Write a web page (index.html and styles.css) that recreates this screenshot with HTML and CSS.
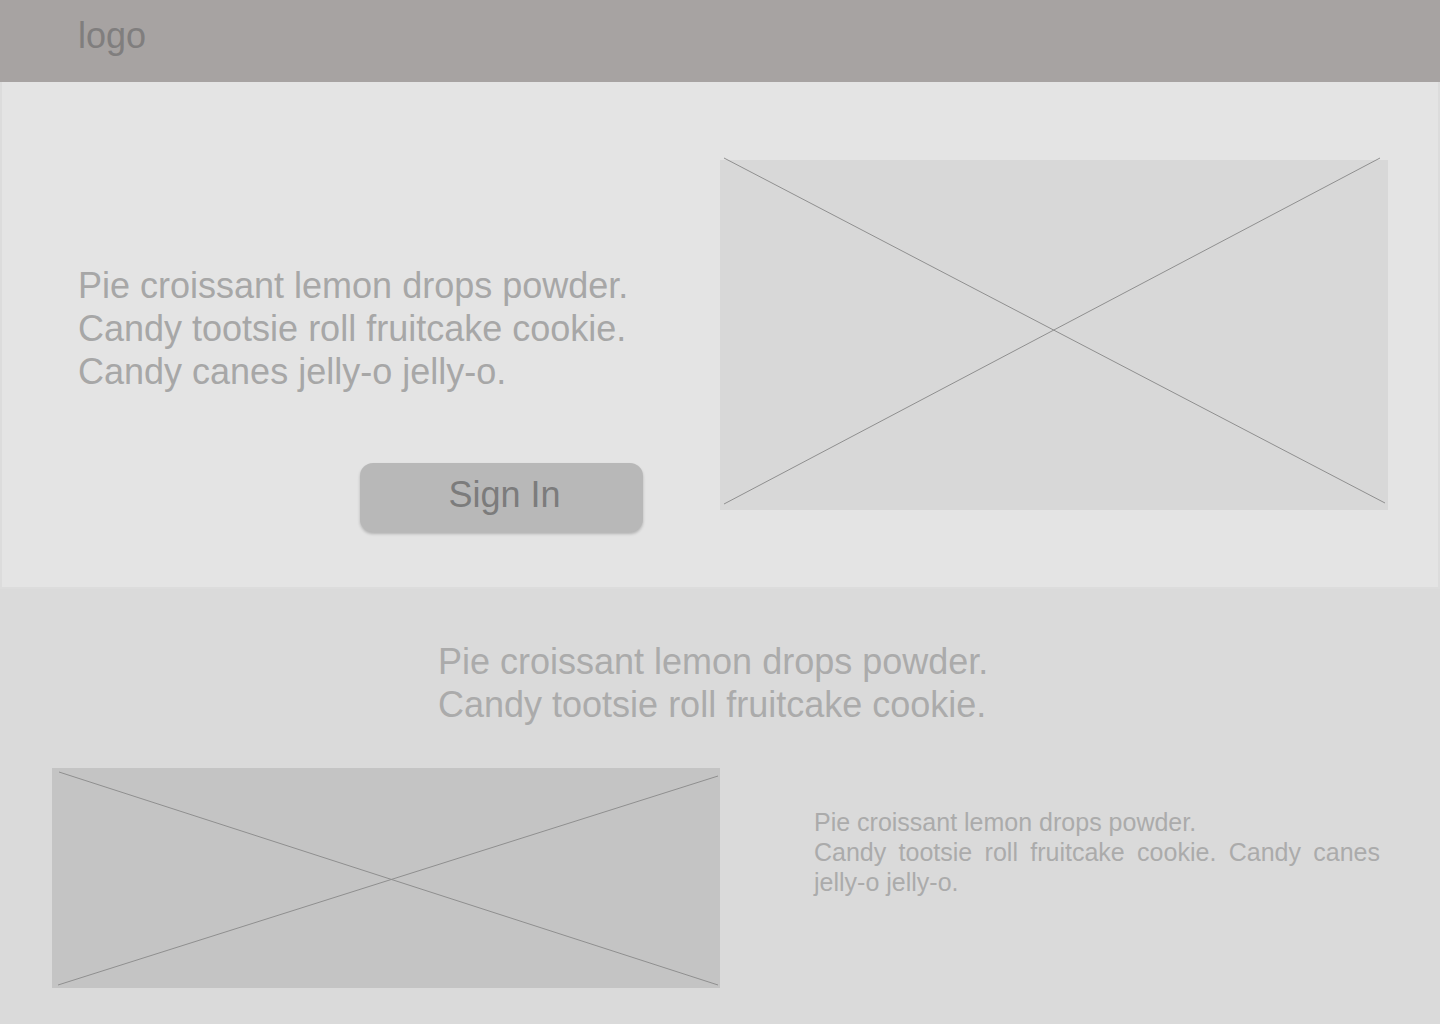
FILE: index.html
```html
<!DOCTYPE html>
<html lang="en">
<head>
<meta charset="utf-8">
<title>Wireframe</title>
<link rel="stylesheet" href="styles.css">
</head>
<body>
<header class="topbar">
  <div class="logo">logo</div>
</header>
<section class="hero">
  <div class="hero-copy">
    <p class="hero-text">Pie croissant lemon drops powder.<br>Candy tootsie roll fruitcake cookie.<br>Candy canes jelly-o jelly-o.</p>
    <button class="btn-signin" type="button">Sign In</button>
  </div>
  <div class="placeholder hero-img">
    <svg class="x-lines" viewBox="0 0 668 350" preserveAspectRatio="none">
      <line x1="4" y1="-2" x2="665" y2="343"/>
      <line x1="660" y1="-2" x2="4" y2="344"/>
    </svg>
  </div>
</section>
<section class="feature">
  <h2 class="feature-title">Pie croissant lemon drops powder.<br>Candy tootsie roll fruitcake cookie.</h2>
  <div class="feature-row">
    <div class="placeholder feature-img">
      <svg class="x-lines" viewBox="0 0 668 220" preserveAspectRatio="none">
        <line x1="7" y1="4" x2="666" y2="217"/>
        <line x1="666" y1="8" x2="6" y2="217"/>
      </svg>
    </div>
    <p class="feature-text">Pie croissant lemon drops powder.<br>Candy tootsie roll fruitcake cookie. Candy canes jelly-o jelly-o.</p>
  </div>
</section>
</body>
</html>
```
FILE: styles.css
```css
* { box-sizing: border-box; }
html, body { margin: 0; padding: 0; }
body {
  width: 1440px;
  height: 1024px;
  overflow: hidden;
  background: #dadada;
  font-family: "Liberation Sans", Arial, Helvetica, sans-serif;
}
.topbar {
  height: 82px;
  background: #a7a3a2;
  padding-left: 78px;
  display: flex;
  align-items: flex-start;
}
.logo {
  font-size: 36px;
  line-height: 40px;
  margin-top: 16px;
  color: #807e7e;
}
.hero {
  height: 507px;
  background: #e4e4e4;
  border: 2px solid #dcdcdc;
  border-top: 0;
  padding: 78px 50px 0 76px;
  display: flex;
  align-items: flex-start;
}
.hero-copy {
  width: 565px;
  margin-right: 77px;
  margin-top: 104px;
  display: flex;
  flex-direction: column;
}
.hero-text {
  margin: 0;
  font-size: 36px;
  line-height: 43px;
  color: #a7a7a7;
}
.btn-signin {
  align-self: flex-end;
  margin-top: 70px;
  width: 283px;
  height: 69px;
  border: 0;
  border-radius: 13px;
  background: #b8b8b8;
  box-shadow: 0 2px 3px rgba(0,0,0,0.22);
  font-family: inherit;
  font-size: 36px;
  color: #7c7c7c;
  padding: 0 0 6px 6px;
  cursor: pointer;
}
.placeholder {
  position: relative;
}
.x-lines {
  position: absolute;
  inset: 0;
  width: 100%;
  height: 100%;
  overflow: visible;
}
.x-lines line {
  stroke: #8f8f8f;
  stroke-width: 1;
}
.hero-img {
  width: 668px;
  height: 350px;
  background: #d8d8d8;
}
.feature {
  padding: 51px 52px 0 52px;
}
.feature-title {
  margin: 0 0 42px 386px;
  font-weight: normal;
  font-size: 36px;
  line-height: 43px;
  color: #ababab;
}
.feature-row {
  display: flex;
  align-items: flex-start;
}
.feature-img {
  width: 668px;
  height: 220px;
  background: #c4c4c4;
}
.feature-text {
  margin: 39px 0 0 94px;
  width: 566px;
  font-size: 25px;
  line-height: 30px;
  text-align: justify;
  color: #ababab;
}
```
